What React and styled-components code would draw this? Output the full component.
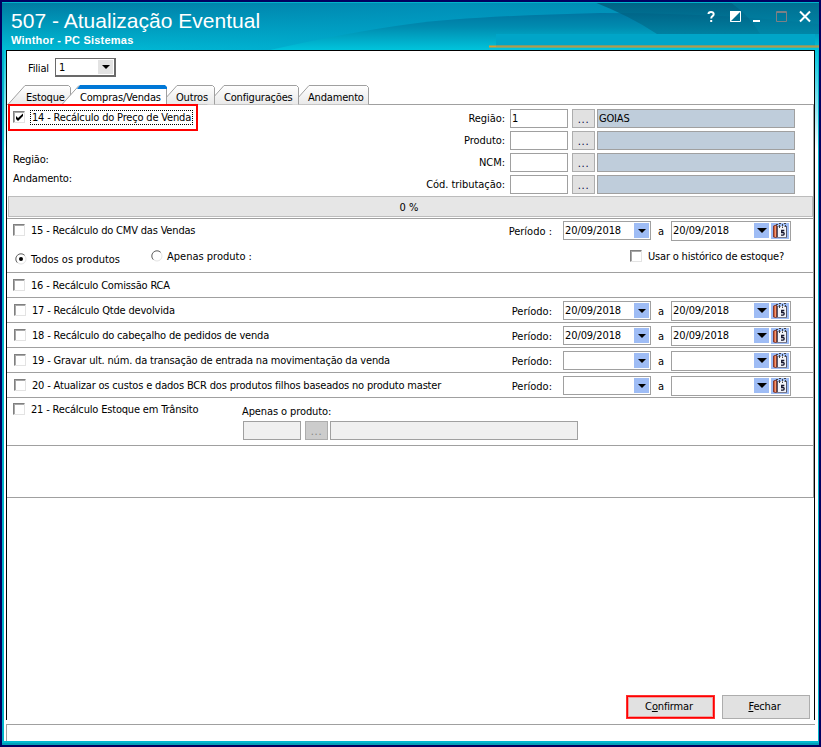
import React from 'react';
import styled, { createGlobalStyle } from 'styled-components';

const GlobalStyle = createGlobalStyle`
  * { box-sizing: border-box; }
  body { margin: 0; background: #000060; }
`;

const Window = styled.div`
  width: 821px;
  height: 747px;
  display: flex;
  flex-direction: column;
  border: 2px solid #000060;
  background: #00b4cb;
  font-family: 'DejaVu Sans Condensed', 'DejaVu Sans', sans-serif;
  font-stretch: condensed;
  font-size: 11px;
  line-height: 14px;
  letter-spacing: -0.18px;
  color: #000;
`;

const Header = styled.header`
  position: relative;
  display: flex;
  justify-content: space-between;
  height: 48px;
  flex: none;
  overflow: hidden;
`;

const HeaderArt = styled.svg`
  position: absolute;
  left: 0;
  top: 0;
`;

const Titles = styled.div`
  position: relative;
  padding: 7px 0 0 9px;
  color: #fff;
  font-family: 'Liberation Sans', Arial, sans-serif;
`;

const Title = styled.h1`
  margin: 0;
  font-size: 21px;
  line-height: 23px;
  font-weight: 400;
  letter-spacing: 0.02px;
`;

const Subtitle = styled.div`
  font-size: 11px;
  line-height: 17px;
  font-weight: 700;
  letter-spacing: 0.22px;
`;

const WindowIcons = styled.svg`
  position: relative;
  margin: 7px 5px 0 0;
`;

const Body = styled.div`
  display: flex;
  flex-direction: column;
  flex: 1;
  margin: 0 1px 0 2px;
  padding: 0 3px 0 2px;
  background: linear-gradient(#00c4dc, #fff 100px);
`;

const Content = styled.main`
  display: flex;
  flex-direction: column;
  height: 670px;
  border: 1px solid #000;
  border-bottom: 0;
  background: #fff;
`;

const StatusBar = styled.footer`
  margin: 4px 0 0;
  height: 17px;
  border-top: 1px solid #a0a0a0;
  border-left: 1px solid #a0a0a0;
  background: #fff;
`;

const BottomEdge = styled.div`
  height: 4px;
  flex: none;
  background: linear-gradient(#00b9cf 50%, #00a0b8 50%);
`;

const FilialRow = styled.label`
  display: flex;
  align-items: flex-start;
  height: 34px;
  padding: 7px 0 0 21px;
`;

const FilialText = styled.span`
  width: 27px;
  padding-top: 4px;
`;

const Combo = styled.span`
  display: flex;
  justify-content: space-between;
  width: 61px;
  height: 19px;
  padding: 1px 1px 1px 3px;
  border: 1px solid #696969;
  border-right-width: 2px;
  border-bottom-width: 2px;
  line-height: 16px;
`;

const ComboButton = styled.span`
  display: flex;
  align-items: center;
  justify-content: center;
  width: 15px;
  background: #e3e3e3;
`;

const Caret = styled.i`
  border: ${p => p.$size || 4}px solid transparent;
  border-top-color: #000;
  border-bottom: 0;
`;

const Tabs = styled.nav`
  display: flex;
  height: 19px;
  padding-left: 1px;
`;

const TabBox = styled.div`
  position: relative;
  flex: none;
  width: ${p => p.$w}px;
  height: 20px;
  margin-right: ${p => -(p.$overlap || 0)}px;
  padding: 6px 0 0 ${p => p.$pad}px;
  white-space: nowrap;
  z-index: ${p => p.$z};

  svg { position: absolute; left: 0; top: 0; }
  span { position: relative; }
`;

const Panel = styled.section`
  display: flex;
  flex-direction: column;
  border: 1px solid #a0a0a0;
  border-left: 0;
`;

const Top = styled.div`
  display: flex;
  justify-content: space-between;
  height: 91px;
  padding-right: 18px;
`;

const TopLeft = styled.div`
  width: 260px;
`;

const Highlight = styled.div`
  display: flex;
  align-items: center;
  width: 190px;
  height: 27px;
  margin: -1px 0 0 1px;
  padding: 0 0 1px 3px;
  border: 2px solid #f00;
  position: relative;
  z-index: 20;
`;

const Info = styled.div`
  padding: 19px 0 0 6px;
  line-height: 19px;
`;

const Lookups = styled.div`
  display: grid;
  grid-template-columns: auto 62px 25px 198px;
  grid-auto-rows: 19px;
  row-gap: 3px;
  padding-top: 4px;
`;

const LookupLabel = styled.span`
  padding: 3px 5px 0 0;
  text-align: right;
  letter-spacing: -0.05px;
`;

const Field = styled.span`
  width: ${p => p.$w}px;
  height: 19px;
  padding: 2px 1px;
  border: 1px solid #a0a0a0;
  background: ${p => p.$bg || '#fff'};
`;

const Dots = styled.span`
  width: 23px;
  height: 19px;
  border: 1px solid #adadad;
  background: ${p => (p.$disabled ? '#ccc' : '#e1e1e1')};
  color: ${p => (p.$disabled ? '#838383' : '#000040')};
  text-align: center;
  line-height: 19px;
  letter-spacing: 0.7px;
`;

const Progress = styled.div`
  height: 21px;
  margin: 0 0 1px 1px;
  padding-right: 3px;
  border: 1px solid #bcbcbc;
  background: #e6e6e6;
  text-align: center;
  line-height: 22px;
  letter-spacing: 0.1px;
`;

const Row = styled.div`
  display: flex;
  justify-content: space-between;
  height: 25px;
  padding: 6px 22px 0 ${p => p.$left || 7}px;
  border-top: 1px solid #a0a0a0;
`;

const Check = styled.label`
  display: flex;
  height: 13px;
  white-space: nowrap;
`;

const Box = styled.i`
  display: flex;
  width: 12px;
  height: 12px;
  margin-right: 5px;
  border: 1px solid #e3e3e3;
  border-top: 1px solid #808080;
  border-left: 1px solid #808080;
  box-shadow: inset 1px 1px #a8a8a8;
`;

const CheckText = styled.span`
  padding: 0 1px;
  outline: ${p => (p.$focus ? '1px dotted #000' : '0')};
  line-height: 13px;
  ${p => p.$focus && 'margin-left: 1px;'}
`;

const Period = styled.div`
  display: flex;
  height: 19px;
  margin-top: -3px;
`;

const PeriodLabel = styled.span`
  padding: 4px 11px 0 0;
  letter-spacing: 0;
`;

const DateBox = styled.span`
  display: flex;
  width: ${p => p.$w}px;
  height: ${p => p.$h}px;
  padding: 1px;
  border: 1px solid #a0a0a0;
`;

const DateText = styled.span`
  flex: 1;
  line-height: 15px;
  letter-spacing: -0.1px;
`;

const Drop = styled.span`
  display: flex;
  align-items: center;
  justify-content: center;
  width: 15px;
  height: 15px;
  background: #9ebcf5;
`;

const CalendarButton = styled.span`
  width: 18px;
  height: 16px;
  margin-left: 2px;
  background: #9ebcf5;
`;

const Until = styled.span`
  width: 20px;
  padding-top: 4px;
  text-align: center;
`;

const Fifteen = styled.div`
  display: flex;
  flex-direction: column;
  height: 54px;
  border-top: 1px solid #a0a0a0;
`;

const Line = styled.div`
  display: flex;
  justify-content: space-between;
  height: ${p => p.$h}px;
  padding: ${p => p.$top}px ${p => p.$right || 22}px 0 6px;
`;

const Radios = styled.div`
  display: flex;
  align-items: flex-start;
  padding-left: 2px;
`;

const RadioLabel = styled.label`
  display: flex;
  width: ${p => p.$w}px;
  padding-top: ${p => p.$down || 0}px;
  white-space: nowrap;
  letter-spacing: 0;
  svg { margin-right: 4px; flex: none; }
`;

const Transit = styled.div`
  display: flex;
  height: 48px;
  padding: 5px 0 0 6px;
  border-top: 1px solid #a0a0a0;
`;

const TransitCheck = styled.div`
  width: 230px;
`;

const TransitLabel = styled.div`
  height: 18px;
  padding-top: 2px;
  margin-left: -1px;
  letter-spacing: -0.1px;
`;

const TransitFields = styled.div`
  display: grid;
  grid-template-columns: 62px 25px 248px;
`;

const Blank = styled.div`
  height: 52px;
  border-top: 1px solid #a0a0a0;
`;

const Buttons = styled.div`
  display: flex;
  gap: 7px;
  justify-content: flex-end;
  margin-top: auto;
  padding: 0 4px 1px 0;
`;

const Button = styled.button`
  width: ${p => (p.$marked ? 89 : 88)}px;
  height: 24px;
  padding: 0 3px 0 0;
  border: 1px solid ${p => (p.$marked ? '#ff3030' : '#adadad')};
  box-shadow: ${p => (p.$marked ? 'inset 0 0 0 1px #f00, inset 0 0 0 2px #f0a0a0' : 'none')};
  background: #e1e1e1;
  color: #000;
  font: inherit;
  letter-spacing: -0.15px;
`;

const CheckBox = ({ checked, focus, children }) => (
  <Check>
    <Box>
      {checked && (
        <svg width="10" height="10" viewBox="0 0 10 10">
          <path d="M2 4v3l2 2 5-5V1.500L4 6z" fill="#000" />
        </svg>
      )}
    </Box>
    <CheckText $focus={focus}>{children}</CheckText>
  </Check>
);

const Radio = ({ checked, w, down, children }) => (
  <RadioLabel $w={w} $down={down}>
    <svg width="12" height="12" viewBox="0 0 12 12">
      <circle cx="6" cy="6" r="5" fill="#fff" stroke="#e3e3e3" />
      <path d="M2.3 9.7A5 5 0 0 1 9.7 2.3" fill="none" stroke="#696969" />
      {checked && <circle cx="6" cy="6" r="2" />}
    </svg>
    {children}
  </RadioLabel>
);

const Calendar = () => (
  <svg width="18" height="16" viewBox="0 0 18 16">
    <path d="M2.500 3L5.500 2v12.500l-3-.5z" fill="#d8603c" stroke="#7c3a32" />
    <path d="M4.500 3v11" stroke="#f09a70" />
    <path d="M7 3h8v11.500H7z" fill="#f2f3f8" />
    <path d="M6.500 3v11.500M15.500 3v11.500" stroke="#55556a" />
    <path d="M6 14.500h10" stroke="#7a7a8c" />
    <path d="M5 1.500h2M8 .5h2M11 1.500h1M13 .5h2M8.500 2v3M11.500 2v3M14.500 2v2" fill="none" stroke="#444" />
    <path d="M7 3.500h8" stroke="#9c9ca8" strokeDasharray="1 1" />
    <path d="M13.300 7.500h-2.600v2h1.300q1.200 0 1.200 1.300T12 12.200h-2" fill="none" stroke="#15152e" strokeWidth="1.300" />
  </svg>
);

const Dates = ({ label = 'Período:', value }) => (
  <Period>
    <PeriodLabel>{label}</PeriodLabel>
    <DateBox $w={88} $h={19}>
      <DateText>{value}</DateText>
      <Drop><Caret /></Drop>
    </DateBox>
    <Until>a</Until>
    <DateBox $w={120} $h={20}>
      <DateText>{value}</DateText>
      <Drop><Caret $size={5} /></Drop>
      <CalendarButton><Calendar /></CalendarButton>
    </DateBox>
  </Period>
);

const Tab = ({ w, pad, active, overlap, z, children }) => (
  <TabBox $w={w} $pad={pad} $overlap={overlap} $z={z}>
    <svg width={w} height="20">
      <defs>
        <linearGradient id="tab" x2="0" y2="1">
          <stop offset="0" stopColor="#fff" />
          <stop offset="1" stopColor="#e9e9e9" />
        </linearGradient>
      </defs>
      <path
        d={`M0 19.500L17 .5H${w - 2.5}l2 2V19.500`}
        fill={active ? '#fff' : 'url(#tab)'}
        stroke={active ? 'none' : '#a0a0a0'}
      />
      {active && <path d={`M0 19.500L17 .5M${w - 0.5} 3V19`} stroke="#a0a0a0" />}
      {active && <path d={`M18 0H${w - 2}l2 2v2H15z`} fill="#0078d7" />}
    </svg>
    <span>{children}</span>
  </TabBox>
);

const lookups = [
  ['Região:', '1', 'GOIAS'],
  ['Produto:', '', ''],
  ['NCM:', '', ''],
  ['Cód. tributação:', '', ''],
];

const tasks = [
  { text: '17 - Recálculo Qtde devolvida', date: '20/09/2018' },
  { text: '18 - Recálculo do cabeçalho de pedidos de venda', date: '20/09/2018' },
  { text: '19 - Gravar ult. núm. da transação de entrada na movimentação da venda' },
  { text: '20 - Atualizar os custos e dados BCR dos produtos filhos baseados no produto master' },
];

const App = () => (
  <>
    <GlobalStyle />
    <Window>
      <Header>
        <HeaderArt width="817" height="48" viewBox="2 2 817 48">
          <defs>
            <linearGradient id="sky" x2="0" y2="1">
              <stop offset="0" stopColor="#0079a0" />
              <stop offset="1" stopColor="#00bcd6" />
            </linearGradient>
            <linearGradient id="light" x2="1" y2="0">
              <stop offset="0" stopColor="#009cc6" stopOpacity="0" />
              <stop offset=".55" stopColor="#009cc6" stopOpacity=".8" />
              <stop offset="1" stopColor="#009cc6" stopOpacity=".6" />
            </linearGradient>
            <linearGradient id="wave" gradientUnits="userSpaceOnUse" x1="0" x2="0" y1="12" y2="50">
              <stop offset="0" stopColor="#0074a0" />
              <stop offset=".4" stopColor="#008cb0" />
              <stop offset="1" stopColor="#00c4dc" />
            </linearGradient>
            <linearGradient id="dark" x2="0" y2="1">
              <stop offset="0" stopColor="#005474" />
              <stop offset="1" stopColor="#007898" />
            </linearGradient>
          </defs>
          <path d="M2 2h817v48H2z" fill="url(#sky)" />
          <path d="M2 2h817v48H2z" fill="url(#light)" opacity=".75" />
          <path d="M270 50Q350 32 410 24T600 13Q720 13 819 24V50z" fill="url(#wave)" />
          <path d="M594 2Q630 16 657 34H819V2z" fill="url(#dark)" opacity=".75" />
          <path d="M730 2Q750 16 760 34H819V2z" fill="#0098ba" opacity=".25" />
          <path d="M496 34h319v12H496z" fill="#00a5c8" />
          <path d="M489 46.500h330" stroke="#e09a2a" strokeWidth="2" />
          <path d="M496 46h323" stroke="#7f9a70" />
          <path d="M2 2.500h817" stroke="#00b4cb" />
        </HeaderArt>
        <Titles>
          <Title>507 - Atualização Eventual</Title>
          <Subtitle>Winthor - PC Sistemas</Subtitle>
        </Titles>
        <WindowIcons width="108" height="16" viewBox="0 0 108 16">
          <path d="M2.500 5Q2.500 3 5 3T7.700 5Q7.700 6.500 6.500 7.200T5.200 9.500M5.200 11v2" fill="none" stroke="#fff" strokeWidth="2" />
          <path d="M24.500 2.500h10v10h-10z" fill="none" stroke="#fff" />
          <path d="M24 2h11L24 13z" fill="#fff" />
          <path d="M47 11h7v2h-7z" fill="#fff" />
          <path d="M70.500 2.500h10v10h-10zM70 3.500h11" fill="none" stroke="#7d8085" />
          <path d="M94 2.500l10 10M104 2.500l-10 10" stroke="#fff" strokeWidth="2" />
        </WindowIcons>
      </Header>
      <Body>
        <Content>
          <FilialRow>
            <FilialText>Filial</FilialText>
            <Combo>1<ComboButton><Caret /></ComboButton></Combo>
          </FilialRow>
          <Tabs>
            <Tab w={63} pad={18} overlap={9} z={1}>Estoque</Tab>
            <Tab w={105} pad={18} overlap={7} z={10} active>Compras/Vendas</Tab>
            <Tab w={55} pad={16} overlap={8} z={5}>Outros</Tab>
            <Tab w={92} pad={17} overlap={7} z={4}>Configurações</Tab>
            <Tab w={77} pad={16} z={3}>Andamento</Tab>
          </Tabs>
          <Panel>
            <Top>
              <TopLeft>
                <Highlight><CheckBox checked focus>14 - Recálculo do Preço de Venda</CheckBox></Highlight>
                <Info>
                  <div>Região:</div>
                  <div>Andamento:</div>
                </Info>
              </TopLeft>
              <Lookups>
                {lookups.map(([label, code, name]) => (
                  <React.Fragment key={label}>
                    <LookupLabel>{label}</LookupLabel>
                    <Field $w={58}>{code}</Field>
                    <Dots>...</Dots>
                    <Field $w={198} $bg="#bfcddb">{name}</Field>
                  </React.Fragment>
                ))}
              </Lookups>
            </Top>
            <Progress>0 %</Progress>
            <Fifteen>
              <Line $h={29} $top={5}>
                <CheckBox>15 - Recálculo do CMV das Vendas</CheckBox>
                <Dates label="Período :" value="20/09/2018" />
              </Line>
              <Line $h={24} $top={2} $right={28}>
                <Radios>
                  <Radio checked w={136} down={3}>Todos os produtos</Radio>
                  <Radio w={110}>Apenas produto :</Radio>
                </Radios>
                <CheckBox>Usar o histórico de estoque?</CheckBox>
              </Line>
            </Fifteen>
            <Row $left={6}><CheckBox>16 - Recálculo Comissão RCA</CheckBox></Row>
            {tasks.map(({ text, date }) => (
              <Row key={text}>
                <CheckBox>{text}</CheckBox>
                <Dates value={date} />
              </Row>
            ))}
            <Transit>
              <TransitCheck><CheckBox>21 - Recálculo Estoque em Trânsito</CheckBox></TransitCheck>
              <div>
                <TransitLabel>Apenas o produto:</TransitLabel>
                <TransitFields>
                  <Field $w={58} $bg="#f0f0f0" />
                  <Dots $disabled>...</Dots>
                  <Field $w={248} $bg="#f0f0f0" />
                </TransitFields>
              </div>
            </Transit>
            <Blank />
          </Panel>
          <Buttons>
            <Button $marked>C<u>o</u>nfirmar</Button>
            <Button><u>F</u>echar</Button>
          </Buttons>
        </Content>
        <StatusBar />
      </Body>
      <BottomEdge />
    </Window>
  </>
);

export default App;
